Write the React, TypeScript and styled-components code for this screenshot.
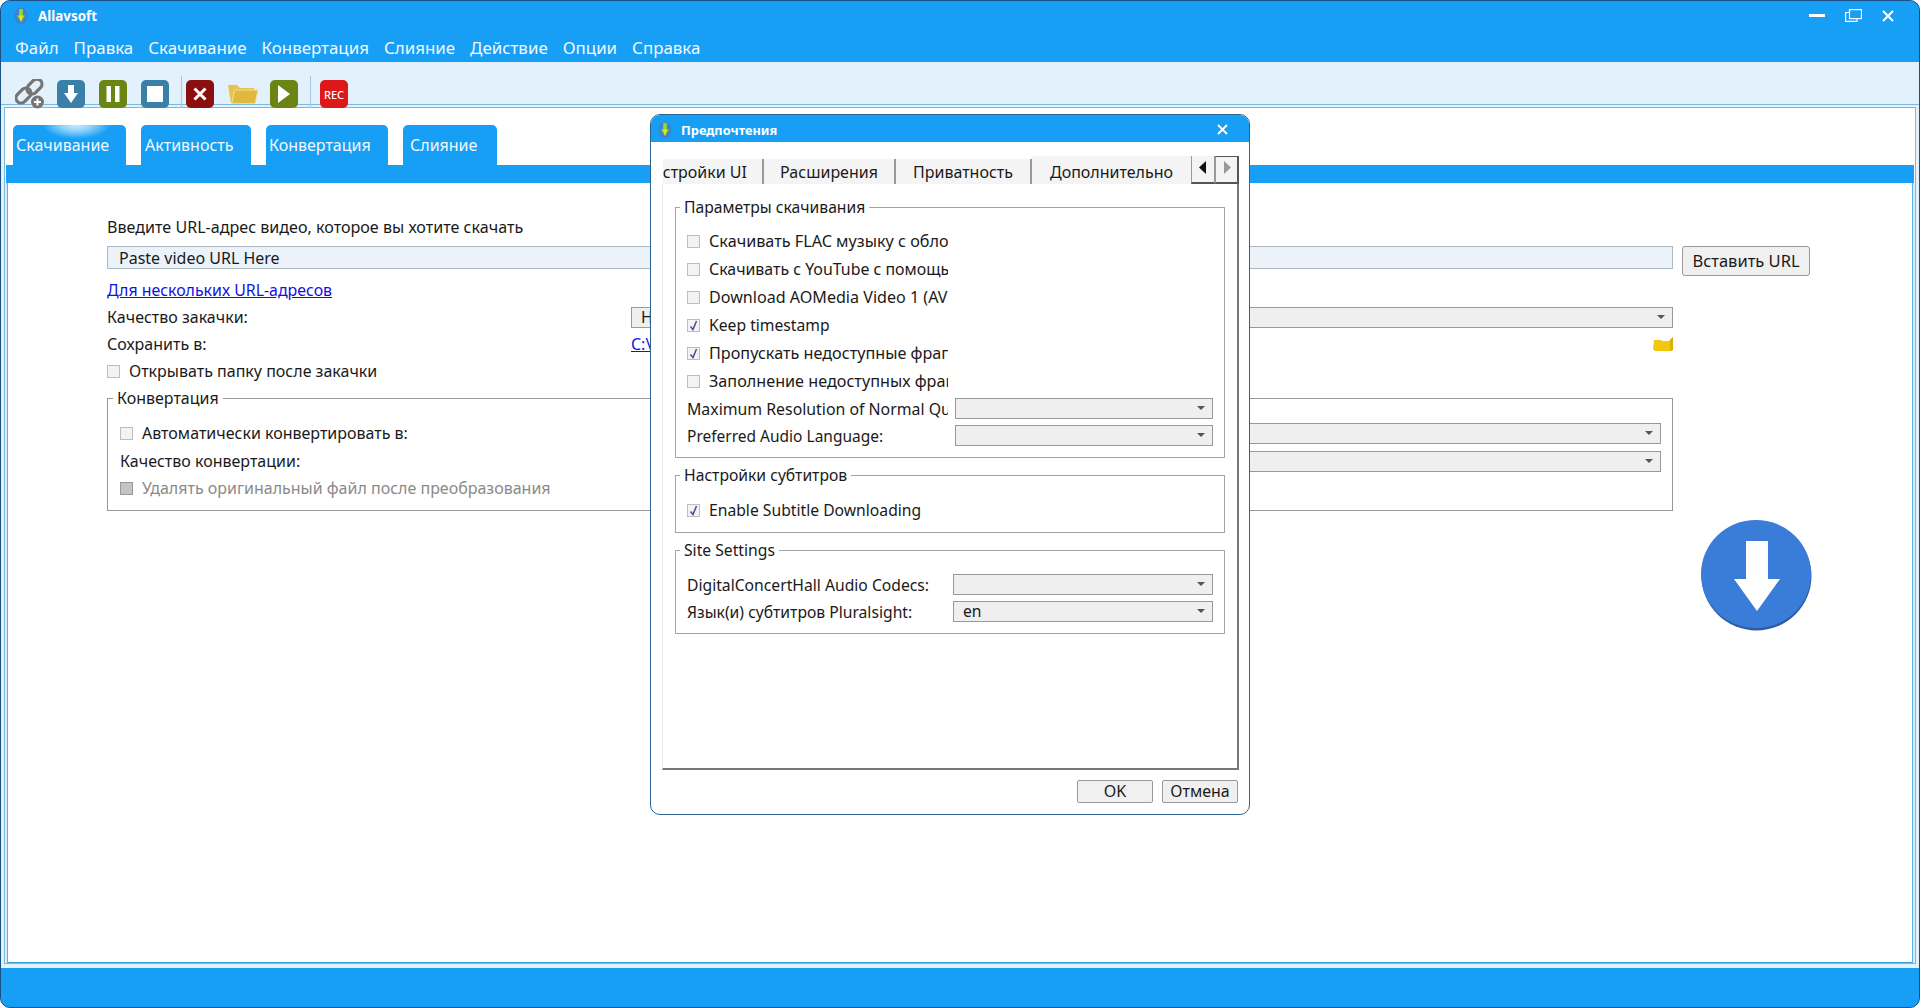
import React from "react";
import styled, { createGlobalStyle } from "styled-components";

const Global = createGlobalStyle`
  html, body { margin: 0; padding: 0; background: #fff; }
  body { font-family: "Noto Sans", "Liberation Sans", sans-serif; font-size: 16px; color: #1a1a1a; }
  * { box-sizing: border-box; }
`;

const Window = styled.div`
  position: relative; width: 1920px; height: 1008px; display: flex; flex-direction: column;
  background: #169ff5; border: 1px solid #1c4f86; border-radius: 10px; overflow: hidden;
`;
const TitleRow = styled.div`
  height: 31px; display: flex; align-items: center; padding: 0 25px 2px 11px; color: #fff;
`;
const AppTitle = styled.div<{ $size: number; $ml: number }>`
  margin-left: ${(p) => p.$ml}px; font-weight: 700; font-size: ${(p) => p.$size}px; flex: 1; color: #fff;
`;
const WinControls = styled.div`display: flex; align-items: center; gap: 20px;`;
const MenuBar = styled.div`
  height: 30px; display: flex; align-items: center; gap: 15px; padding: 1px 0 0 14px; color: #f2f8ff; font-size: 16.9px;
`;
const Toolbar = styled.div`
  position: relative; z-index: 1; height: 43px; background: #e3f1fd; border-bottom: 1px solid #7cb9df;
  display: flex; align-items: flex-start; padding: 18px 0 0 14px;
`;
const ToolSlot = styled.div<{ $ml?: number }>`margin-left: ${(p) => p.$ml ?? 0}px; height: 28px; display: flex; align-items: center;`;
const ToolBtn = styled.div<{ $bg: string }>`
  width: 28px; height: 28px; border-radius: 5px; background: ${(p) => p.$bg};
  display: flex; align-items: center; justify-content: center; color: #fff;
  font-size: 11px; font-weight: 500;
`;
const ToolSep = styled.div<{ $ml?: number }>`
  margin-left: ${(p) => p.$ml ?? 0}px; margin-top: -4px; width: 1px; height: 32px; background: #9ccbe8;
`;
const Body = styled.div`
  flex: 1; background: #e3f1fd; padding: 2px 3px 4px; display: flex; min-height: 0;
`;
const Frame = styled.div`
  flex: 1; background: #fff; border: 1px solid #7fb8d8; display: flex; flex-direction: column; min-width: 0;
`;
const TabRow = styled.div`padding: 17px 0 0 8px; height: 57px; flex: none; display: flex; gap: 15px; `;
const Tab = styled.div<{ $w: number; $pl: number; $glow?: boolean }>`
  width: ${(p) => p.$w}px; height: 40px; padding-left: ${(p) => p.$pl}px; border-radius: 5px 5px 0 0;
  background: ${(p) => p.$glow ? "radial-gradient(ellipse 34px 14px at 56% 0, #c8ecff 0%, #8bd2fb 45%, #169ff5 100%)" : "#169ff5"};
  color: #f2f8ff; font-size: 16px; line-height: 40px;
`;
const Band = styled.div`height: 18px; flex: none; margin: 0 1px; background: #169ff5;`;
const ContentArea = styled.div`
  flex: 1; min-height: 0; border: solid #d6ecfb; border-width: 0 2px;
  box-shadow: inset 1px 0 0 #5fb0dc, inset -1px 0 0 #5fb0dc, inset 0 -1px 0 #3fa3dc;
`;
const Form = styled.div`padding: 34px 0 0 100px; width: 1820px;`;
const Line = styled.div<{ $h: number; $mt?: number; $size?: number }>`
  height: ${(p) => p.$h}px; margin-top: ${(p) => p.$mt ?? 0}px; line-height: ${(p) => p.$h}px; white-space: nowrap;
  font-size: ${(p) => p.$size ?? 16}px;
`;
const UrlRow = styled.div`margin-top: 9px; display: flex; gap: 9px; align-items: flex-start;`;
const UrlInput = styled.div`
  width: 1566px; height: 23px; padding-left: 11px; line-height: 22px; border: 1px solid #aeb8c0; background: #ebf2fa;
`;
const PasteBtn = styled.div`
  width: 128px; height: 30px; line-height: 28px; text-align: center; border: 1px solid #999; border-radius: 3px; background: #f0f0f0; font-size: 16.5px;
`;
const BlueLink = styled.a`color: #0f12e0; text-decoration: underline;`;
const FormGrid = styled.div<{ $h: number; $mt?: number; $w?: number; $col?: number }>`
  display: grid; grid-template-columns: ${(p) => p.$col ?? 524}px 1fr; align-items: center;
  height: ${(p) => p.$h}px; margin-top: ${(p) => p.$mt ?? 0}px; width: ${(p) => p.$w ?? 1566}px; white-space: nowrap;
`;
const SelectBox = styled.div`
  position: relative; height: 21px; padding-left: 9px; line-height: 19px; background: #efefef; border: 1px solid #999;
  &::after {
    content: ""; position: absolute; right: 7px; top: 7px; border-style: solid; border-width: 4px 4px 0; border-color: #555 transparent transparent;
  }
`;
const FolderRow = styled.div`display: flex; justify-content: space-between; align-items: center;`;
const CheckRow = styled.div<{ $h?: number; $mt?: number; $muted?: boolean; $gap?: number }>`
  display: flex; align-items: center; gap: ${(p) => p.$gap ?? 9}px; height: ${(p) => p.$h ?? 28}px; margin-top: ${(p) => p.$mt ?? 0}px;
  color: ${(p) => p.$muted ? "#8a8a8a" : "inherit"}; white-space: nowrap;
`;
const ClipText = styled.span<{ $w?: number; $size?: number }>`
  display: block; width: ${(p) => p.$w ?? 239}px; overflow: hidden; white-space: nowrap; font-size: ${(p) => p.$size ?? 15.7}px;
`;
const Box = styled.div<{ $off?: boolean }>`
  width: 13px; height: 13px; flex: none; border: 1px solid ${(p) => p.$off ? "#999" : "#bdbdbd"};
  background: ${(p) => p.$off ? "#c4c4c4" : "#f3f3f3"}; display: flex; align-items: center; justify-content: center;
`;
const MainGroup = styled.fieldset`
  margin: 7px 0 0; padding: 0; width: 1565px; height: 123px; border: 1px solid #999;
`;
const GroupLegend = styled.legend<{ $ml?: number }>`
  margin-left: ${(p) => p.$ml ?? 4}px; padding: 0 4px; line-height: 20px;
`;
const MainGroupBody = styled.div`padding: 11px 11px 0 12px;`;
const Dialog = styled.div`
  position: absolute; left: 649px; top: 113px; width: 600px; height: 701px; background: #fff; font-size: 15.7px;
  border: 1px solid #2b6494; border-radius: 10px; overflow: hidden; display: flex; flex-direction: column;
`;
const DialogTitle = styled.div`
  height: 27px; background: #169ff5; display: flex; align-items: center; padding: 2px 21px 0 5px; flex: none;
`;
const DialogTabs = styled.div`
  height: 28px; margin: 14px 10px 0 12px; display: flex; align-items: flex-end; flex: none; overflow: hidden; font-size: 16px;
`;
const PageTab = styled.div<{ $w: number; $active?: boolean; $first?: boolean }>`
  flex: none; width: ${(p) => p.$w}px; height: ${(p) => p.$active ? 28 : 25}px; background: #f4f4f4;
  border-right: ${(p) => p.$active ? "none" : "2px solid #9a9a9a"};
  text-align: ${(p) => p.$first ? "right" : "center"}; padding-right: ${(p) => p.$first ? 15 : 0}px;
  margin-left: ${(p) => p.$first ? "-30px" : "0"}; line-height: ${(p) => p.$active ? 32 : 26}px; white-space: nowrap;
`;
const ScrollBtn = styled.div<{ $dim?: boolean }>`
  flex: none; width: 24px; height: 28px; background: #f4f4f4; border: 1px solid #9a9a9a; border-top: ${(p) => p.$dim ? "1px solid #555" : "none"};
  border-right: ${(p) => p.$dim ? "2px solid #555" : "1px solid #9a9a9a"}; border-bottom: 2px solid #555;
  display: flex; align-items: center; justify-content: center; padding-bottom: 4px;
`;
const Pane = styled.div`
  height: 586px; margin: 0 10px 0 11px; flex: none; padding: 13px 12px 0 12px;
  border-left: 1px solid #e8e8e8; border-right: 2px solid #777; border-bottom: 2px solid #777;
`;
const Group = styled.fieldset<{ $h: number; $mt?: number }>`
  margin: ${(p) => p.$mt ?? 0}px 0 0; padding: 0; height: ${(p) => p.$h}px; border: 1px solid #a4a4a4; min-width: 0;
`;
const GroupBody = styled.div<{ $pt: number }>`padding: ${(p) => p.$pt}px 11px 0 11px;`;
const DialogField = styled.div<{ $col: number }>`
  display: grid; grid-template-columns: ${(p) => p.$col}px 1fr; align-items: center; height: 27px; white-space: nowrap;
`;
const Footer = styled.div`display: flex; justify-content: flex-end; gap: 9px; padding: 10px 11px 0 0; font-size: 16px;`;
const FooterBtn = styled.div`
  width: 76px; height: 23px; line-height: 21px; text-align: center; background: #f0f0f0; border: 1px solid #999; border-radius: 2px;
`;
const StatusBar = styled.div`height: 39px; flex: none;`;
const BigDownload = styled.div`
  position: absolute; left: 1700px; top: 519px;
`;

const AppIcon = () => (
  <svg width="18" height="20" viewBox="0 0 18 20">
    <ellipse cx="9" cy="10" rx="6.5" ry="8.5" fill="#3f83cf" />
    <path d="M7.2 3 h3.6 v6.5 h2.2 L9 16 5 9.5 h2.2 Z" fill="#8fdc2a" />
    <path d="M7.2 9.5 h3.6 L9 16 Z" fill="#f0e22b" />
  </svg>
);
const LinkIcon = () => (
  <svg width="30" height="30" viewBox="0 0 30 30" fill="none">
    <g stroke="#757575" strokeWidth="3.2">
      <rect x="14.5" y="-1" width="10" height="17" rx="5" transform="rotate(45 19.5 7.5)" />
      <rect x="3.5" y="8" width="10" height="17" rx="5" transform="rotate(45 8.5 16.5)" />
    </g>
    <circle cx="22.5" cy="23" r="6.5" fill="#757575" />
    <path d="M19 23 h7 M22.5 19.5 v7" stroke="#fff" strokeWidth="2" />
  </svg>
);
const ArrowDown = () => (
  <svg width="16" height="20" viewBox="0 0 16 20"><path d="M5 1 h6 v8 h4 L8 19 1 9 h4 Z" fill="#fff" /></svg>
);
const Pause = () => (
  <svg width="16" height="16" viewBox="0 0 16 16"><path d="M1.5 0 h4.5 v16 h-4.5 Z M10 0 h4.5 v16 h-4.5 Z" fill="#fff" /></svg>
);
const Stop = () => <svg width="16" height="16" viewBox="0 0 16 16"><rect width="16" height="16" fill="#fff" /></svg>;
const Cross = () => (
  <svg width="16" height="16" viewBox="0 0 16 16"><path d="M2.5 2.5 L13.5 13.5 M13.5 2.5 L2.5 13.5" stroke="#fff" strokeWidth="3" /></svg>
);
const Play = () => <svg width="14" height="18" viewBox="0 0 14 18"><path d="M1 0 L13 9 1 18 Z" fill="#fff" /></svg>;
const BigFolder = () => (
  <svg width="30" height="20" viewBox="0 0 30 20">
    <path d="M0 1 h9 l3 3 h14 v4 H6 L4 19 H3 Z" fill="#e8c24c" />
    <path d="M4 19 L6.5 6 H30 L27 19.5 H4 Z" fill="#dfb93d" stroke="#f0dc9a" strokeWidth="1" />
  </svg>
);
const SmallFolder = () => (
  <svg width="20" height="15" viewBox="0 0 20 15">
    <path d="M1 3 h7 l1 1 h7 L20 0 v13 l-2 1 H2 L0 12 Z" fill="#f2c80f" />
    <path d="M17 3 L20 0 v13 l-3 1 Z" fill="#ddb000" />
  </svg>
);
const Check = () => (
  <svg width="9" height="11" viewBox="0 0 9 11"><path d="M1.5 6.5 L4 9.5 L7.5 1" stroke="#4a4a9c" strokeWidth="1.5" fill="none" /></svg>
);
const Tick = ({ on, off }: { on?: boolean; off?: boolean }) => <Box $off={off}>{on && <Check />}</Box>;

const tools = (
  <>
    <ToolSlot><LinkIcon /></ToolSlot>
    <ToolSlot $ml={12}><ToolBtn $bg="#3a7fa8"><ArrowDown /></ToolBtn></ToolSlot>
    <ToolSlot $ml={14}><ToolBtn $bg="#6b8514"><Pause /></ToolBtn></ToolSlot>
    <ToolSlot $ml={14}><ToolBtn $bg="#3a7fa8"><Stop /></ToolBtn></ToolSlot>
    <ToolSep $ml={12} />
    <ToolSlot $ml={4}><ToolBtn $bg="#8b0f0f"><Cross /></ToolBtn></ToolSlot>
    <ToolSlot $ml={14}><BigFolder /></ToolSlot>
    <ToolSlot $ml={12}><ToolBtn $bg="#6b8514"><Play /></ToolBtn></ToolSlot>
    <ToolSep $ml={12} />
    <ToolSlot $ml={9}><ToolBtn $bg="#dc1818">REC</ToolBtn></ToolSlot>
  </>
);

const menu = ["Файл", "Правка", "Скачивание", "Конвертация", "Слияние", "Действие", "Опции", "Справка"];

export default function App() {
  return (
    <Window>
      <Global />
      <TitleRow>
        <AppIcon />
        <AppTitle $size={13.4} $ml={8}>Allavsoft</AppTitle>
        <WinControls>
          <svg width="16" height="4" viewBox="0 0 16 4"><rect width="16" height="3" fill="#fff" /></svg>
          <svg width="17" height="13" viewBox="0 0 17 13" fill="none" stroke="#fff" strokeWidth="1.2">
            <rect x="4.5" y="0.6" width="12" height="9" />
            <path d="M4.5 3.5 H0.6 V12.4 H12 V9.6" />
          </svg>
          <svg width="12" height="12" viewBox="0 0 12 12"><path d="M1 1 L11 11 M11 1 L1 11" stroke="#fff" strokeWidth="2" /></svg>
        </WinControls>
      </TitleRow>
      <MenuBar>{menu.map((m) => <span key={m}>{m}</span>)}</MenuBar>
      <Toolbar>{tools}</Toolbar>
      <Body>
        <Frame>
          <TabRow>
            <Tab $w={113} $pl={3} $glow>Скачивание</Tab>
            <Tab $w={110} $pl={4}>Активность</Tab>
            <Tab $w={122} $pl={3}>Конвертация</Tab>
            <Tab $w={94} $pl={7}>Слияние</Tab>
          </TabRow>
          <Band />
          <ContentArea>
            <Form>
              <Line $h={20} $size={16.1}>Введите URL-адрес видео, которое вы хотите скачать</Line>
              <UrlRow>
                <UrlInput>Paste video URL Here</UrlInput>
                <PasteBtn>Вставить URL</PasteBtn>
              </UrlRow>
              <Line $h={20} $mt={4} $size={15.9}><BlueLink>Для нескольких URL-адресов</BlueLink></Line>
              <FormGrid $h={21} $mt={6}>
                <span>Качество закачки:</span>
                <SelectBox>H</SelectBox>
              </FormGrid>
              <FormGrid $h={20} $mt={6}>
                <span>Сохранить в:</span>
                <FolderRow><BlueLink>C:\</BlueLink><SmallFolder /></FolderRow>
              </FormGrid>
              <CheckRow $h={20} $mt={8}><Tick /><span>Открывать папку после закачки</span></CheckRow>
              <MainGroup>
                <GroupLegend $ml={5}>Конвертация</GroupLegend>
                <MainGroupBody>
                  <FormGrid $h={28} $w={1541} $col={540}>
                    <CheckRow><Tick /><span>Автоматически конвертировать в:</span></CheckRow>
                    <SelectBox />
                  </FormGrid>
                  <FormGrid $h={28} $w={1541} $col={540}>
                    <span>Качество конвертации:</span>
                    <SelectBox />
                  </FormGrid>
                  <CheckRow $muted $h={26}><Tick off /><span>Удалять оригинальный файл после преобразования</span></CheckRow>
                </MainGroupBody>
              </MainGroup>
            </Form>
          </ContentArea>
        </Frame>
      </Body>
      <StatusBar />
      <BigDownload>
        <svg width="112" height="112" viewBox="0 0 112 112">
          <ellipse cx="55.5" cy="56" rx="55" ry="54.5" fill="#2c5c9f" />
          <ellipse cx="55" cy="54" rx="55" ry="54" fill="#3a7dd9" />
          <path d="M45 21 H67 V59 H79 L56 91 33 59 H45 Z" fill="#fff" />
        </svg>
      </BigDownload>
      <Dialog>
        <DialogTitle>
          <AppIcon />
          <AppTitle $size={12.8} $ml={7}>Предпочтения</AppTitle>
          <svg width="11" height="11" viewBox="0 0 11 11"><path d="M1 1 L10 10 M10 1 L1 10" stroke="#fff" strokeWidth="1.8" /></svg>
        </DialogTitle>
        <DialogTabs>
          <PageTab $w={131} $first>Настройки UI</PageTab>
          <PageTab $w={132}>Расширения</PageTab>
          <PageTab $w={136}>Приватность</PageTab>
          <PageTab $w={159} $active>Дополнительно</PageTab>
          <ScrollBtn><svg width="8" height="13" viewBox="0 0 8 13"><path d="M7 0 V13 L0 6.5 Z" fill="#111" /></svg></ScrollBtn>
          <ScrollBtn $dim><svg width="8" height="13" viewBox="0 0 8 13"><path d="M1 0 V13 L8 6.5 Z" fill="#999" /></svg></ScrollBtn>
        </DialogTabs>
        <Pane>
          <Group $h={261}>
            <GroupLegend>Параметры скачивания</GroupLegend>
            <GroupBody $pt={10}>
              <CheckRow><Tick /><ClipText $size={16.2}>Скачивать FLAC музыку с обложкой</ClipText></CheckRow>
              <CheckRow><Tick /><ClipText $size={15.9}>Скачивать с YouTube с помощью</ClipText></CheckRow>
              <CheckRow><Tick /><ClipText $size={16.1}>Download AOMedia Video 1 (AV1)</ClipText></CheckRow>
              <CheckRow><Tick on /><ClipText>Keep timestamp</ClipText></CheckRow>
              <CheckRow><Tick on /><ClipText $size={16.2}>Пропускать недоступные фрагменты</ClipText></CheckRow>
              <CheckRow><Tick /><ClipText $size={16.2}>Заполнение недоступных фрагментов</ClipText></CheckRow>
              <DialogField $col={268}><ClipText $w={261} $size={15.85}>Maximum Resolution of Normal Quality</ClipText><SelectBox /></DialogField>
              <DialogField $col={268}><ClipText $w={261} $size={15.5}>Preferred Audio Language:</ClipText><SelectBox /></DialogField>
            </GroupBody>
          </Group>
          <Group $h={68} $mt={7}>
            <GroupLegend>Настройки субтитров</GroupLegend>
            <GroupBody $pt={11}>
              <CheckRow><Tick on /><span>Enable Subtitle Downloading</span></CheckRow>
            </GroupBody>
          </Group>
          <Group $h={94} $mt={7}>
            <GroupLegend>Site Settings</GroupLegend>
            <GroupBody $pt={11}>
              <DialogField $col={266}><span>DigitalConcertHall Audio Codecs:</span><SelectBox /></DialogField>
              <DialogField $col={266}><span>Язык(и) субтитров Pluralsight:</span><SelectBox>en</SelectBox></DialogField>
            </GroupBody>
          </Group>
        </Pane>
        <Footer>
          <FooterBtn>OK</FooterBtn>
          <FooterBtn>Отмена</FooterBtn>
        </Footer>
      </Dialog>
    </Window>
  );
}
